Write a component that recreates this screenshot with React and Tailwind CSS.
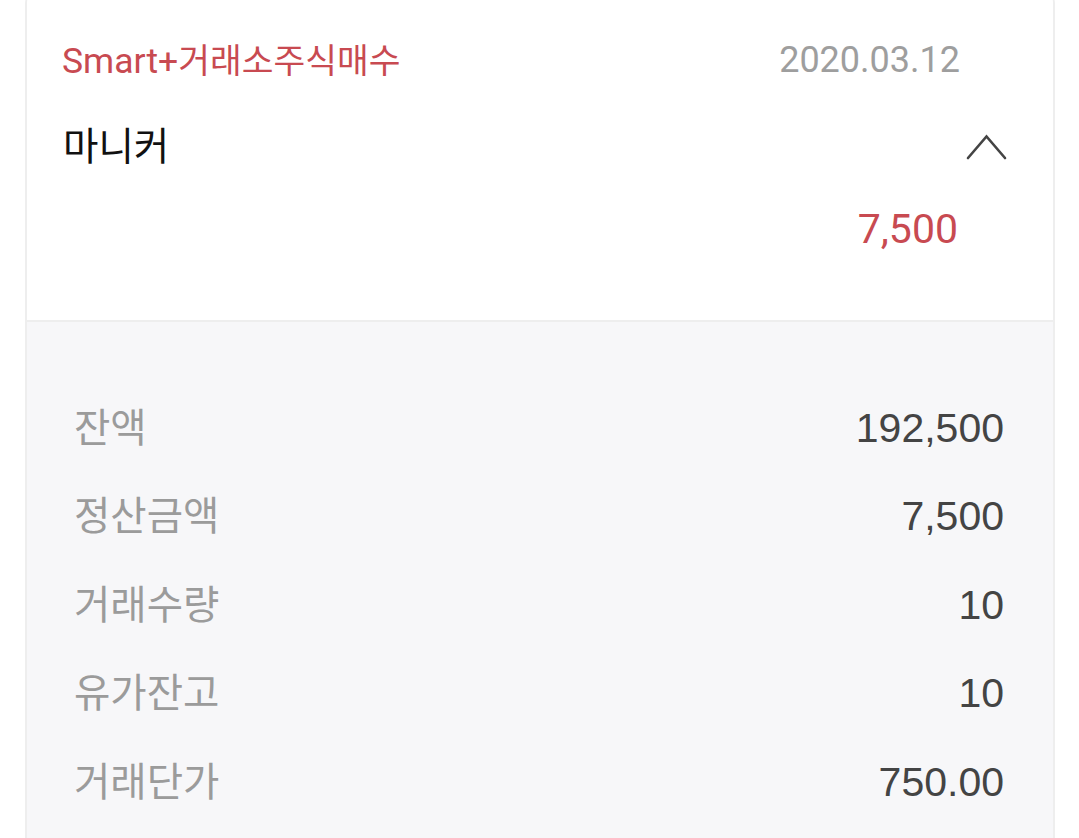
import { useState } from 'react'

const rows = [
  { label: '잔액', value: '192,500' },
  { label: '정산금액', value: '7,500' },
  { label: '거래수량', value: '10' },
  { label: '유가잔고', value: '10' },
  { label: '거래단가', value: '750.00' },
]

function ChevronUp() {
  return (
    <svg width="41" height="26" viewBox="0 0 41 26" fill="none">
      <polyline points="2,24 20.5,2.5 39,24" stroke="#444444" strokeWidth="2.6" strokeLinecap="round" strokeLinejoin="miter" />
    </svg>
  )
}

export default function App() {
  const [open, setOpen] = useState(true)

  return (
    <div className="min-h-[838px] bg-white overflow-hidden font-['Roboto','Noto_Sans_CJK_KR',sans-serif]">
      <div className="ml-[25px] w-[1030px] -mt-[12px] border-2 border-[#eeeeee] rounded-t-[16px] overflow-hidden">
        {/* Header */}
        <div className="bg-white pt-[10px]">
          <div className="h-[120px] flex items-center justify-between pl-[35px] pr-[93px]">
            <span className="text-[#c84a51] leading-none mt-[3px]">
              <span className="text-[35.5px]">Smart+</span>
              <span className="text-[34.5px]">거래소주식매수</span>
            </span>
            <span className="text-[36px] text-[#9e9e9e]">2020.03.12</span>
          </div>
          <div className="h-[54px] flex items-center justify-between pl-[36px] pr-[46px]">
            <span className="text-[38.5px] text-[#111111]">마니커</span>
            <button onClick={() => setOpen(!open)} className={open ? '' : 'rotate-180'}>
              <ChevronUp />
            </button>
          </div>
          <div className="h-[112px] flex items-center justify-end pr-[95px]">
            <span className="text-[41px] text-[#c84a51]">7,500</span>
          </div>
          <div className="h-[34px]" />
        </div>

        {/* Details */}
        {open && (
          <div className="bg-[#f7f7f9] border-t-2 border-[#eeeeee] pt-[62px] pb-[40px] pl-[47px] pr-[49px]">
            {rows.map(r => (
              <div key={r.label} className="h-[88.5px] flex items-center justify-between">
                <span className="text-[39.5px] text-[#9b9b9b]">{r.label}</span>
                <span className="text-[41px] text-[#444444] font-['Liberation_Sans',sans-serif]">{r.value}</span>
              </div>
            ))}
          </div>
        )}
      </div>
    </div>
  )
}
